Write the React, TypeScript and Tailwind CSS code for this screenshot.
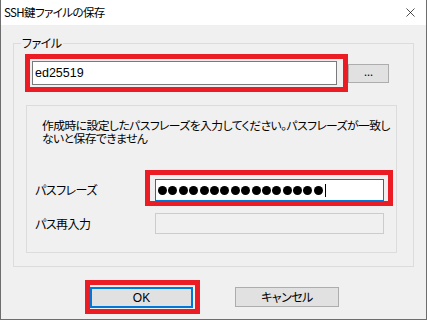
import { X } from 'lucide-react';

const ui = "[font-family:'Noto_Sans_CJK_JP','Noto_Sans',sans-serif] [font-feature-settings:'palt']";

function Dots({ count }: { count: number }) {
    return (
        <div className="flex items-center">
            {Array.from({ length: count }).map((_, i) => (
                <span key={i} className="mr-[1.4px] h-[9px] w-[9px] rounded-full bg-black" />
            ))}
            <span className="ml-[1px] h-[13px] w-[1px] bg-black" />
        </div>
    );
}

export default function App() {
    return (
        <div className={`flex h-[320px] w-[427px] flex-col border-x border-b border-[#6d6d6d] text-[12px] text-black ${ui}`}>
            {/* Title bar */}
            <div className="flex h-[25px] items-center justify-between bg-white pl-[3px] pr-[8px]">
                <span className="text-[11.5px] leading-none tracking-[-0.6px]">SSH鍵ファイルの保存</span>
                <X className="h-[15px] w-[15px] text-black" strokeWidth={1.1} />
            </div>

            {/* Client area */}
            <div className="flex flex-1 flex-col bg-[#f0f0f0]">
                {/* Outer group: ファイル */}
                <div className="relative ml-[12px] mt-[18px] h-[224px] w-[401px] border border-[#dcdcdc]">
                    <span className="absolute left-[7px] top-[-9px] bg-[#f0f0f0] px-[1px] leading-[16px] tracking-[-0.5px]">ファイル</span>

                    <div className="ml-[11px] mt-[10px] flex items-center">
                        <div className="border-[5px] border-[#ec1c24] py-[2px] pl-[2px] pr-[6px]">
                            <div className="flex h-[24px] w-[305px] items-center border border-[#7a7a7a] bg-white pl-[2px] [font-family:'Liberation_Sans',sans-serif] text-[12.5px]">
                                ed25519
                            </div>
                        </div>
                        <div className="flex h-[19px] w-[41px] items-center justify-center border border-[#adadad] bg-[#e1e1e1] pb-[4px] text-[11px]">
                            ...
                        </div>
                    </div>

                    {/* Inner group */}
                    <div className="ml-[12px] mt-[13px] h-[148px] w-[371px] border border-[#dcdcdc]">
                        <p className="whitespace-nowrap pl-[15px] pt-[12px] text-[11.8px] leading-[13px] tracking-[-0.55px]">
                            作成時に設定したパスフレーズを入力してください。パスフレーズが一致し
                            <br />
                            ないと保存できません
                        </p>

                        <div className="mt-[26px] flex items-center pl-[8px]">
                            <span className="w-[110px] pt-[3px] tracking-[-0.5px]">パスフレーズ</span>
                            <div className="border-[5px] border-[#ec1c24] pl-[5px] pr-[4px] pt-[4px]">
                                <div className="flex h-[22px] w-[229px] items-center border border-[#0078d7] bg-white pl-[2px]">
                                    <Dots count={16} />
                                </div>
                            </div>
                        </div>

                        <div className="mt-[7px] flex items-center pl-[8px]">
                            <span className="w-[120px] tracking-[-0.5px]">パス再入力</span>
                            <div className="h-[21px] w-[229px] border border-[#cccccc] bg-[#f0f0f0]" />
                        </div>
                    </div>
                </div>

                {/* Buttons */}
                <div className="ml-[84px] mt-[13px] flex items-center">
                    <div className="border-[5px] border-[#ec1c24] pb-[1px] pr-[2px] pt-[2px]">
                        <div className="flex h-[21px] w-[103px] items-center justify-center border-2 border-[#0078d7] bg-[#e1e1e1] [font-family:'Liberation_Sans',sans-serif]">
                            OK
                        </div>
                    </div>
                    <div className="ml-[35px] flex h-[20px] w-[104px] items-center justify-center border border-[#adadad] bg-[#e1e1e1] tracking-[-0.5px]">
                        キャンセル
                    </div>
                </div>
            </div>
        </div>
    );
}
